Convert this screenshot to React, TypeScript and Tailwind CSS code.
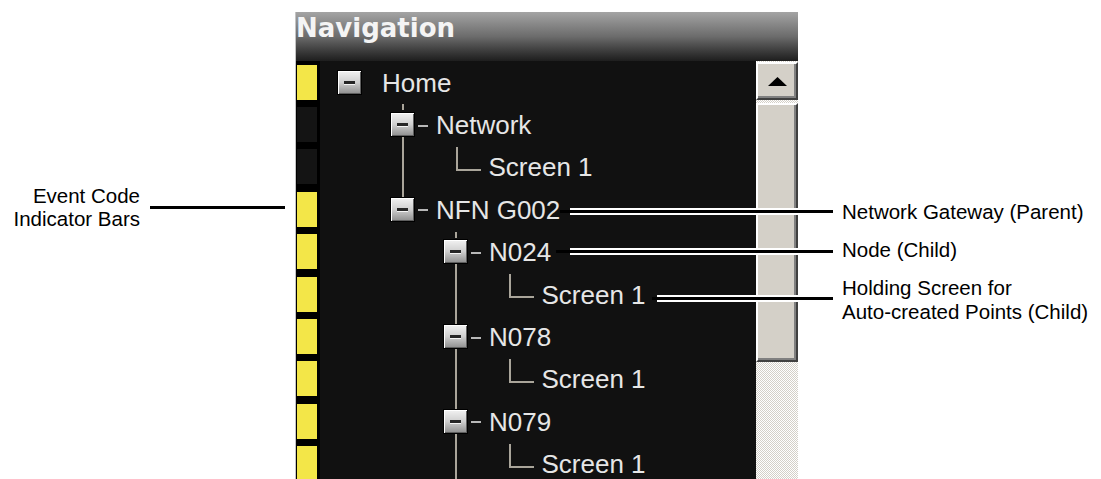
import React from "react";

type TreeRow = {
  label: string;
  level: number;
  leaf?: boolean;
  guides: boolean[];
  up?: "tick" | "line";
  down?: boolean;
  event: boolean;
};

const rows: TreeRow[] = [
  { label: "Home", level: 0, guides: [], event: true },
  { label: "Network", level: 1, guides: [false], up: "tick", down: true, event: false },
  { label: "Screen 1", level: 2, leaf: true, guides: [false, true], event: false },
  { label: "NFN G002", level: 1, guides: [false], up: "line", event: true },
  { label: "N024", level: 2, guides: [false, false], up: "tick", down: true, event: true },
  { label: "Screen 1", level: 3, leaf: true, guides: [false, false, true], event: true },
  { label: "N078", level: 2, guides: [false, false], up: "line", down: true, event: true },
  { label: "Screen 1", level: 3, leaf: true, guides: [false, false, true], event: true },
  { label: "N079", level: 2, guides: [false, false], up: "line", down: true, event: true },
  { label: "Screen 1", level: 3, leaf: true, guides: [false, false, true], event: true },
];

function ToggleBox() {
  return (
    <div className="w-[25px] h-[25px] shrink-0 border border-black bg-linear-to-b from-[#f2f2f2] via-[#cfcfcf] to-[#8e8e8e] shadow-[inset_1px_1px_0_#ffffff,inset_-1px_-1px_0_#5e5e5e] flex items-center justify-center">
      <div className="w-[11px] h-[3px] bg-[#262626] shadow-[0_1px_0_#f4f4f4]" />
    </div>
  );
}

function Guide({ on }: { on: boolean }) {
  return (
    <div className="w-[53px] shrink-0 self-stretch">
      {on && <div className="ml-[11.5px] w-[2px] h-full bg-[#aaa59a]" />}
    </div>
  );
}

function Row({ row }: { row: TreeRow }) {
  return (
    <div className="flex h-[42.4px] shrink-0">
      {/* event code indicator */}
      <div className="w-[24px] shrink-0 bg-black flex items-center pl-[1px]">
        <div className={row.event ? "w-[20px] h-[35px] bg-[#f3e648]" : "w-[20px] h-[35px] bg-[#141414]"} />
      </div>

      <div className="flex-1 bg-[#111111] flex items-center pl-[17px]">
        {row.guides.map((on, i) => (
          <Guide key={i} on={on} />
        ))}
        {row.leaf ? (
          <>
            <div className="self-start mt-[1px] ml-[12.5px] w-[25px] h-[24px] shrink-0 border-l-2 border-b-2 border-[#aaa59a]" />
            <span className="ml-[8px] mt-[1px] text-[26px] leading-none text-[#e6e6e6] whitespace-nowrap">
              {row.label}
            </span>
          </>
        ) : (
          <>
            <div className="w-[25px] shrink-0 self-stretch flex flex-col items-center">
              <div className="flex-1 w-[2px]">
                {row.up === "line" && <div className="h-full bg-[#aaa59a]" />}
                {row.up === "tick" && <div className="mt-[1px] h-[6px] bg-[#aaa59a]" />}
              </div>
              <ToggleBox />
              <div className={row.down ? "flex-1 w-[2px] bg-[#aaa59a]" : "flex-1 w-[2px]"} />
            </div>
            {row.level > 0 ? (
              <div className="ml-[3px] mr-[8px] mt-[2px] w-[10px] h-[2px] shrink-0 bg-[#b8b8b8]" />
            ) : (
              <div className="w-[20px] shrink-0" />
            )}
            <span className="mt-[1px] text-[26px] leading-none text-[#e6e6e6] whitespace-nowrap">
              {row.label}
            </span>
          </>
        )}
      </div>
    </div>
  );
}

const classicButton =
  "bg-[#d4d0c8] border-2 border-t-white border-l-white border-r-[#404040] border-b-[#404040] shadow-[inset_-2px_-2px_0_#808080]";

function ScrollBar() {
  return (
    <div className="w-[42px] shrink-0 flex flex-col pt-[1px] bg-[image:repeating-conic-gradient(#d4d0c8_0%_25%,#ffffff_0%_50%)] bg-[length:2px_2px]">
      <div className={`h-[38px] flex items-center justify-center ${classicButton}`}>
        <svg width="19" height="9" viewBox="0 0 19 9">
          <polygon points="9.5,0 19,9 0,9" fill="#000000" />
        </svg>
      </div>
      <div className={`mt-[3px] h-[259px] ${classicButton}`} />
    </div>
  );
}

export default function App() {
  return (
    <div className="relative w-[1101px] h-[479px] overflow-hidden bg-white flex font-['Liberation_Sans',Arial,sans-serif]">
      {/* left label */}
      <div className="w-[295px] shrink-0 pt-[184px]">
        <div className="flex items-center">
          <div className="w-[140px] text-right text-[20.5px] leading-[23px] text-black">
            <div>Event Code</div>
            <div>Indicator Bars</div>
          </div>
          <div className="ml-[10px] w-[135px] h-[3px] bg-black" />
        </div>
      </div>

      {/* navigation panel */}
      <div className="w-[503px] shrink-0 mt-[12px] border-l border-[#c4c4c4] flex flex-col">
        <div className="h-[49px] shrink-0 bg-linear-to-b from-[#a4a4a4] via-[#6c6c6c] to-[#1e1e1e] pt-[3px]">
          <span className="font-['DejaVu_Sans',sans-serif] font-bold text-[26px] leading-[26px] text-[#f4f4f4]">
            Navigation
          </span>
        </div>
        <div className="flex h-[418px] overflow-hidden">
          <div className="flex-1 flex flex-col overflow-hidden bg-[#111111]">
            {rows.map((r, i) => (
              <Row key={i} row={r} />
            ))}
          </div>
          <ScrollBar />
        </div>
      </div>

      {/* right labels */}
      <div className="flex-1 pl-[44px] pt-[200px] text-[20.5px] leading-[24px] text-black whitespace-nowrap">
        <div>Network Gateway (Parent)</div>
        <div className="mt-[14px]">Node (Child)</div>
        <div className="mt-[14px]">
          <div>Holding Screen for</div>
          <div>Auto-created Points (Child)</div>
        </div>
      </div>

      {/* leader lines with white halo over the dark panel */}
      <div className="absolute left-[570px] top-[208px] w-[228px] h-[7px] bg-white" />
      <div className="absolute left-[560px] top-[210px] w-[273px] h-[3px] bg-black" />

      <div className="absolute left-[570px] top-[248px] w-[228px] h-[7px] bg-white" />
      <div className="absolute left-[556px] top-[250px] w-[277px] h-[3px] bg-black" />

      <div className="absolute left-[657px] top-[295px] w-[141px] h-[7px] bg-white" />
      <div className="absolute left-[652px] top-[297px] w-[181px] h-[3px] bg-black" />
    </div>
  );
}
